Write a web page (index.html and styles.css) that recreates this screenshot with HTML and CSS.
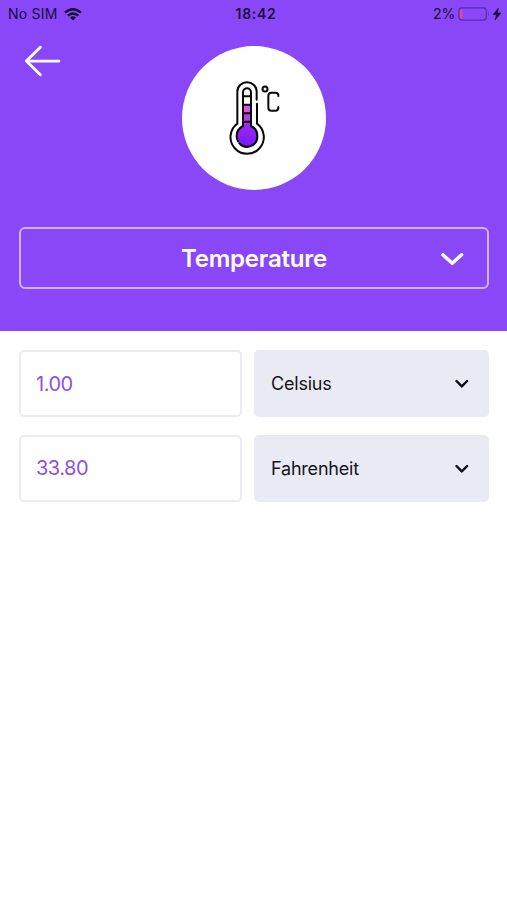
FILE: index.html
```html
<!DOCTYPE html>
<html lang="en">
<head>
<meta charset="utf-8">
<title>Temperature</title>
<link rel="stylesheet" href="styles.css">
</head>
<body>
<header class="header">
  <div class="status">
    <div class="carrier"><span class="sim">No SIM</span>
      <svg width="18" height="13" viewBox="0 0 18 13" fill="none" stroke="#160a30" stroke-width="2.4"><path d="M.9 4.7Q9-2.2 17.1 4.7M3.7 7.7Q9 3.2 14.3 7.7"/><path d="M9 12.6 6 9.6Q9 7.1 12 9.6Z" fill="#160a30" stroke="none"/></svg>
    </div>
    <div class="clock">18:42</div>
    <div class="power"><span class="percent">2%</span>
      <svg width="44" height="14" viewBox="0 0 44 14"><rect x=".8" y=".9" width="27.5" height="12.2" rx="3" fill="none" stroke="#5b2cab" stroke-width="1.2"/><rect x="2.2" y="2.8" width="2.2" height="8.4" rx=".8" fill="#f0487c"/><path d="M30 4.8q1.8 2.2 0 4.4z" fill="#5b2cab"/><path d="M40.5 1 35 7.6h3.6L37 13l6-7h-3.7z" fill="#160a30" stroke="#160a30" stroke-width=".5"/></svg>
    </div>
  </div>
  <div class="hero">
    <svg class="back" width="38" height="32" viewBox="0 0 38 32" fill="none" stroke="#fff" stroke-width="2.8" stroke-linecap="round" stroke-linejoin="round"><path d="M16.4 2.3 2.3 16.1 16.4 29.7M2.3 16.1H35"/></svg>
    <div class="badge">
      <svg width="80" height="95" viewBox="0 0 240 285" fill="none" stroke="#080808" stroke-width="6" stroke-linecap="round" stroke-linejoin="round">
        <defs><linearGradient id="bulb" x1="0" y1="0" x2="0" y2="1"><stop stop-color="#a52cf0"/><stop offset="1" stop-color="#7418fb"/></linearGradient></defs>
        <path d="M84 168V154H107V168C119 173 127 185 127 199A31 31 0 1 1 65 199C65 186 73 174 84 168Z" fill="url(#bulb)" stroke="none"/>
        <path d="M84 104H107V130H84Z" fill="#d057e7" stroke="none"/>
        <path d="M84 130H107V155H84Z" fill="#b83dea" stroke="none"/>
        <path d="M125 89V65A29 28 0 0 0 67 65V161A50 50 0 1 0 126 161V101"/>
        <path d="M84 168V67A12 12 0 0 1 108 67V168C119 173 127 184 127 199A31 31 0 0 1 73 220M84 168C72 174 65 185 65 199Q65 207 69 214M84 79H107M84 104H107M84 130H107M84 155H107"/>
        <circle cx="150" cy="57" r="7.5"/>
        <path d="M190 78V76Q190 68 181 68H169Q160 68 160 78V113Q160 122 169 122H181Q190 122 190 113V111"/>
      </svg>
    </div>
  </div>
  <div class="category"><span class="title">Temperature</span>
    <svg class="chevron" width="24" height="14" viewBox="0 0 24 14" fill="none" stroke="#fff" stroke-width="3.5" stroke-linecap="round" stroke-linejoin="round"><path d="m2.8 2.8 9.4 8.4 9.4-8.4"/></svg>
  </div>
</header>
<main class="rows">
  <div class="value"><span class="one">1.00</span></div>
  <div class="unit"><span class="celsius">Celsius</span><svg width="15" height="10" viewBox="0 0 15 10" fill="none" stroke="#0b0b10" stroke-width="2.4" stroke-linecap="round" stroke-linejoin="round"><path d="m1.5 2 5.3 5.4L12.1 2"/></svg></div>
  <div class="value"><span class="two">33.80</span></div>
  <div class="unit"><span class="fahrenheit">Fahrenheit</span><svg width="15" height="10" viewBox="0 0 15 10" fill="none" stroke="#0b0b10" stroke-width="2.4" stroke-linecap="round" stroke-linejoin="round"><path d="m1.5 2 5.3 5.4L12.1 2"/></svg></div>
</main>
</body>
</html>
```
FILE: styles.css
```css
* { box-sizing: border-box; }
body {
  margin: 0;
  min-height: 900px;
  background: #fff;
  font-family: Inter, "Liberation Sans", sans-serif;
}
svg { display: block; flex: none; }
.header { height: 331px; background: #8a47f7; }
.status {
  height: 28px;
  display: grid;
  grid-template-columns: 1fr auto 1fr;
  align-items: center;
  padding: 0 5px 0 8px;
  font-size: 14px;
  line-height: 28px;
  color: #1c0c3b;
}
.carrier, .power { display: flex; align-items: center; }
.carrier { gap: 6px; }
.sim { letter-spacing: .22px; }
.power { justify-content: flex-end; gap: 3px; }
.percent { letter-spacing: -.2px; }
.clock { font-weight: 600; letter-spacing: .7px; padding-left: 2px; }
.hero {
  height: 199px;
  display: grid;
  grid-template-columns: 182px 144px;
  align-items: start;
  padding-top: 18px;
}
.back { margin-left: 24px; margin-top: -1px; }
.badge {
  width: 144px;
  height: 144px;
  border-radius: 50%;
  background: #fff;
  padding: 24px 0 0 33px;
}
.category {
  height: 62px;
  margin: 0 18px 0 19px;
  border: 2px solid #d3b2fc;
  border-radius: 6px;
  display: grid;
  grid-template-columns: 60px 1fr 60px;
  align-items: center;
  color: #fff;
  font-size: 24px;
  font-weight: 600;
}
.title { grid-column: 2; text-align: center; letter-spacing: -.2px; padding-top: 1px; }
.chevron { margin: 1px 0 0 13px; }
.rows {
  display: grid;
  grid-template-columns: 223px 235px;
  grid-auto-rows: 67px;
  gap: 18px 12px;
  padding: 19px 18px 0 19px;
}
.value, .unit { display: flex; align-items: center; border-radius: 5px; }
.value {
  border: 2px solid #ebeaf5;
  padding-left: 15px;
  color: #904fe3;
  font-size: 20px;
  letter-spacing: -.5px;
}
.two { margin-top: -1px; }
.unit {
  justify-content: space-between;
  background: #eaeaf4;
  padding: 0 19px 0 17px;
  color: #15151c;
  font-size: 18px;
  letter-spacing: -.2px;
}
```
